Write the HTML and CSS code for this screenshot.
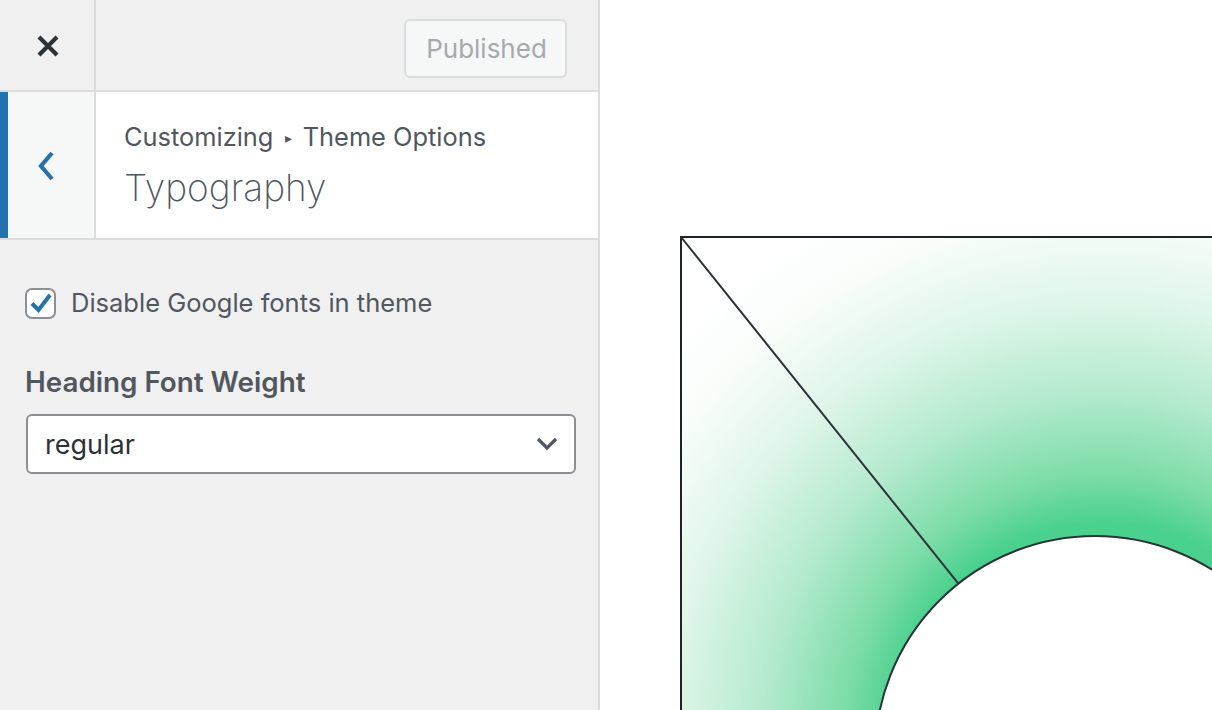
FILE: index.html
```html
<!DOCTYPE html>
<html lang="en">
<head>
<meta charset="utf-8">
<title>Customizer – Typography</title>
<link rel="stylesheet" href="styles.css">
</head>
<body>
<div class="app">
  <aside class="sidebar">
    <header class="topbar">
      <div class="close-btn">
        <svg width="24" height="24" viewBox="0 0 24 24"><path d="M3 3 L21 21 M21 3 L3 21" stroke="#2c3338" stroke-width="4.2" fill="none"/></svg>
      </div>
      <div class="topbar-actions">
        <button class="publish-btn">Published</button>
      </div>
    </header>
    <div class="section-title">
      <div class="back-btn">
        <svg width="18" height="30" viewBox="0 0 18 30"><path d="M15 2 L4 15 L15 28" stroke="#2271b1" stroke-width="4.2" fill="none"/></svg>
      </div>
      <div class="title-text">
        <div class="crumb">Customizing <span class="sep">▸</span> Theme Options</div>
        <h1 class="title">Typography</h1>
      </div>
    </div>
    <div class="controls">
      <label class="check-row">
        <span class="checkbox">
          <svg width="26" height="26" viewBox="0 0 26 26"><path d="M4 13.5 L10.5 20 L22 5" stroke="#2271b1" stroke-width="4" fill="none"/></svg>
        </span>
        <span class="check-label">Disable Google fonts in theme</span>
      </label>
      <div class="field">
        <div class="field-label">Heading Font Weight</div>
        <div class="select">
          <span class="select-value">regular</span>
          <svg width="22" height="14" viewBox="0 0 22 14"><path d="M2 2 L11 11 L20 2" stroke="#50575e" stroke-width="3.2" fill="none"/></svg>
        </div>
      </div>
    </div>
  </aside>
  <main class="preview">
    <svg class="drawing" width="612" height="710" viewBox="0 0 612 710">
      <defs>
        <radialGradient id="ring" gradientUnits="userSpaceOnUse" cx="505" cy="735" r="590">
          <stop offset="0.36" stop-color="#4ad18d"/>
          <stop offset="0.44" stop-color="#7cdca8"/>
          <stop offset="0.58" stop-color="#b4eace"/>
          <stop offset="0.74" stop-color="#e0f6ea"/>
          <stop offset="0.88" stop-color="#f8fdfa"/>
          <stop offset="1" stop-color="#ffffff"/>
        </radialGradient>
      </defs>
      <rect x="81" y="237" width="540" height="480" fill="url(#ring)" stroke="#1d2327" stroke-width="2"/>
      <circle cx="495" cy="756" r="220" fill="#ffffff" stroke="#2c3338" stroke-width="2"/>
      <line x1="81" y1="237" x2="358" y2="583" stroke="#2c3338" stroke-width="2"/>
    </svg>
  </main>
</div>
</body>
</html>
```

FILE: styles.css
```css
* { box-sizing: border-box; }
html, body { margin: 0; padding: 0; }
body {
  width: 1212px;
  height: 710px;
  overflow: hidden;
  font-family: Inter, "Noto Sans", "Liberation Sans", sans-serif;
  color: #50575e;
  background: #fff;
}
.app {
  display: flex;
  height: 710px;
}
.sidebar {
  width: 600px;
  flex: 0 0 600px;
  background: #f0f0f1;
  border-right: 2px solid #dcdcde;
  display: flex;
  flex-direction: column;
}
.topbar {
  height: 92px;
  display: flex;
  border-bottom: 2px solid #dcdcde;
}
.close-btn {
  width: 96px;
  border-right: 2px solid #dcdcde;
  display: flex;
  align-items: center;
  justify-content: center;
  padding-left: 2px;
  padding-top: 2px;
}
.topbar-actions {
  flex: 1;
  display: flex;
  justify-content: flex-end;
  align-items: flex-start;
  padding: 19px 31px 0 0;
}
.publish-btn {
  width: 163px;
  height: 59px;
  border: 2px solid #dcdcde;
  border-radius: 6px;
  background: #f6f7f7;
  color: #a7aaad;
  font-family: inherit;
  font-size: 26px;
  font-weight: 400;
  padding: 0 0 0 2px;
}
.section-title {
  height: 148px;
  display: flex;
  background: #fff;
  border-bottom: 2px solid #dcdcde;
}
.back-btn {
  width: 96px;
  background: #f6f7f7;
  border-left: 8px solid #2271b1;
  border-right: 2px solid #dcdcde;
  display: flex;
  align-items: center;
  justify-content: center;
  padding-right: 10px;
  padding-top: 2px;
}
.title-text {
  padding: 28px 0 0 28px;
}
.crumb {
  font-size: 25.4px;
  line-height: 34px;
  color: #50575e;
}
.sep {
  font-size: 14px;
  vertical-align: 3px;
  margin: 0 4px;
}
.title {
  margin: 10px 0 0;
  font-size: 37px;
  font-weight: 200;
  line-height: 46px;
  color: #50575e;
}
.controls {
  padding: 46px 22px 0 25px;
}
.check-row {
  display: flex;
  align-items: center;
  gap: 15px;
}
.checkbox {
  width: 31px;
  height: 31px;
  border: 2px solid #8c8f94;
  border-radius: 7px;
  background: #fff;
  display: flex;
  align-items: center;
  justify-content: center;
}
.check-label {
  font-size: 25.5px;
  line-height: 34px;
}
.field {
  margin-top: 45px;
}
.field-label {
  font-size: 27.8px;
  font-weight: 600;
  line-height: 34px;
  margin-bottom: 15px;
}
.select {
  margin-left: 1px;
  height: 60px;
  border: 2px solid #8c8f94;
  border-radius: 6px;
  background: #fff;
  display: flex;
  align-items: center;
  justify-content: space-between;
  padding: 0 16px 0 17px;
}
.select-value {
  font-size: 27px;
  color: #2c3338;
}
.preview {
  flex: 1;
  overflow: hidden;
  background: #fff;
}
.drawing { display: block; }
```
